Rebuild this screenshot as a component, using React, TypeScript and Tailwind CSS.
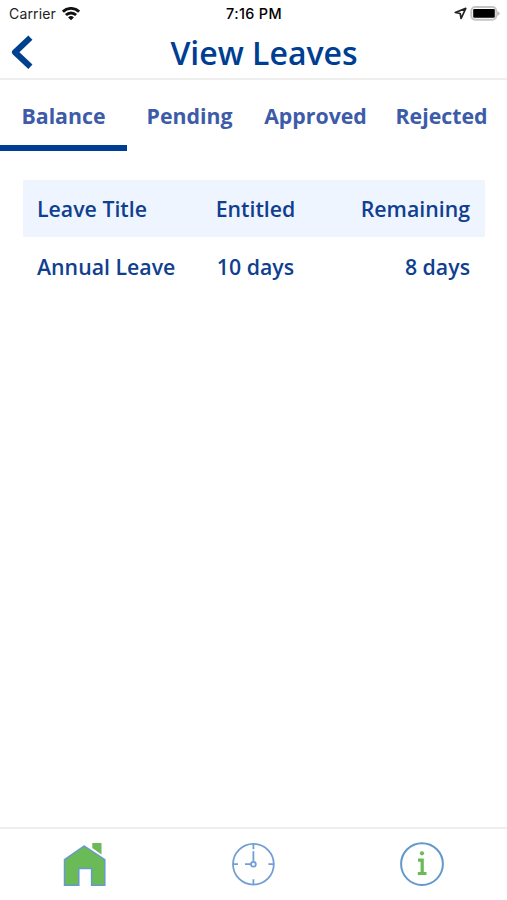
import { useState } from "react";
import { clsx } from "clsx";

const tabs = [
  { title: "Balance", width: "w-[127px]" },
  { title: "Pending", width: "w-[125px]" },
  { title: "Approved", width: "w-[127px]" },
  { title: "Rejected", width: "w-[125px]" },
];

const leaves = [{ title: "Annual Leave", entitled: "10 days", remaining: "8 days" }];

function StatusBar() {
  return (
    <div className="grid h-[27px] shrink-0 grid-cols-3 items-center pl-[9px] pr-[7px] font-['Inter','Liberation_Sans',sans-serif] text-[14px] leading-none text-[#222]">
      <div className="flex items-center gap-[6px]">
        <span className="text-[14px] tracking-[0.15px]">Carrier</span>
        <svg width="18" height="14" viewBox="0 0 18 14" fill="none" stroke="#111" strokeWidth="2.8">
          <path d="M0.9 4.7a11.5 11.5 0 0 1 16.2 0" />
          <path d="M3.9 8.1a7.2 7.2 0 0 1 10.2 0" />
          <path d="M9 13.2 6.1 10.4a4.1 4.1 0 0 1 5.8 0z" fill="#111" stroke="none" />
        </svg>
      </div>
      <span className="pr-[1px] pt-[2px] text-center text-[14.4px] font-medium tracking-[0.35px] text-black">7:16 PM</span>
      <div className="flex items-center justify-end gap-[3px]">
        <svg width="13" height="13" viewBox="0 0 13 13" fill="none" stroke="#222" strokeWidth="1.7" strokeLinejoin="round">
          <path d="M11.8 1.4 1.2 5.5l5 1 .9 5z" />
        </svg>
        <svg width="30" height="16" viewBox="0 0 30 16">
          <rect x="1.3" y="1" width="25" height="12.8" rx="4" fill="#fff" stroke="#c4c4c4" strokeWidth="2" />
          <rect x="3.2" y="3" width="21.6" height="8.8" rx="1.2" fill="#000" />
          <path d="M27.2 4.9v5q2.6-1 2.6-2.5t-2.6-2.5" fill="#bcbcbc" />
        </svg>
      </div>
    </div>
  );
}

function HomeIcon() {
  return (
    <svg width="44" height="46" viewBox="0 0 44 46">
      <path d="M30.3 2h9.2v11.5L30.3 7z" fill="#6aba58" />
      <path
        d="M22.3 5 42.8 18.7v25.6H29.6V27.5H16.8v16.8H2.5V18.7z"
        fill="#6aba58"
        stroke="#6799c9"
        strokeWidth="1.5"
      />
    </svg>
  );
}

function ClockIcon() {
  return (
    <svg width="44" height="44" viewBox="0 0 44 44" fill="none" stroke="#719fd5" strokeWidth="1.8">
      <circle cx="22.4" cy="22.2" r="20.4" />
      <path d="M22.4 2.2v5M22.4 37.2v5M2 22.2h5M37.4 22.2h5M22.4 9.2v10.3M14 22.2h5.8" />
      <circle cx="22.4" cy="22.2" r="2.4" />
    </svg>
  );
}

function InfoIcon() {
  return (
    <svg width="44" height="44" viewBox="0 0 44 44" fill="none">
      <circle cx="22" cy="22.1" r="20.9" stroke="#6299cb" strokeWidth="2" />
      <circle cx="22" cy="11.3" r="2.1" fill="#6aba58" />
      <path d="M18 18.2h4.2v13.3M17.8 31.5h8.7" stroke="#6aba58" strokeWidth="3.2" />
    </svg>
  );
}

export default function App() {
  const [activeTab, setActiveTab] = useState("Balance");

  return (
    <div className="flex h-screen w-full flex-col overflow-hidden bg-white font-['Open_Sans','Noto_Sans',sans-serif] text-[#103f90]">
      <StatusBar />

      <header className="grid h-[53px] shrink-0 grid-cols-[60px_1fr_39px] items-center border-b-2 border-[#eeeeee]">
        <button aria-label="Back" className="pb-[2px] pl-[10px]">
          <svg width="24" height="36" viewBox="0 0 24 36" fill="none" stroke="#00408f" strokeWidth="6" strokeLinejoin="round">
            <path d="M20.4 3.6 5 18.2l15.4 14.6" />
          </svg>
        </button>
        <h1 className="text-center text-[32px] font-semibold leading-[48px] text-[#003e93]">View Leaves</h1>
      </header>

      <nav className="flex h-[71px] shrink-0">
        {tabs.map((tab) => (
          <button
            key={tab.title}
            onClick={() => setActiveTab(tab.title)}
            className={clsx(
              "shrink-0 border-b-[6px] pt-[6px] text-center text-[21.3px] font-bold text-[#3d5ba9]",
              tab.width,
              activeTab === tab.title ? "border-[#003e93]" : "border-transparent"
            )}
          >
            {tab.title}
          </button>
        ))}
      </nav>

      <main className="flex-1 pl-[23px] pr-[22px] pt-[29px]">
        <table className="w-full table-fixed text-[21.3px] font-semibold">
          <thead>
            <tr className="h-[57px] bg-[#eff5ff]">
              <th className="w-[155px] pl-[14px] text-left font-semibold">Leave Title</th>
              <th className="w-[155px] font-semibold">Entitled</th>
              <th className="pr-[15px] text-right font-semibold">Remaining</th>
            </tr>
          </thead>
          <tbody>
            {leaves.map((leave) => (
              <tr key={leave.title} className="h-[60px]">
                <td className="whitespace-nowrap pl-[14px]">{leave.title}</td>
                <td className="text-center">{leave.entitled}</td>
                <td className="pr-[15px] text-right">{leave.remaining}</td>
              </tr>
            ))}
          </tbody>
        </table>
      </main>

      <footer className="grid h-[73px] shrink-0 grid-cols-3 items-center justify-items-center border-t-2 border-[#eeeeee] pb-[1px] pr-[1px]">
        <button aria-label="Home"><HomeIcon /></button>
        <button aria-label="History"><ClockIcon /></button>
        <button aria-label="Information"><InfoIcon /></button>
      </footer>
    </div>
  );
}
